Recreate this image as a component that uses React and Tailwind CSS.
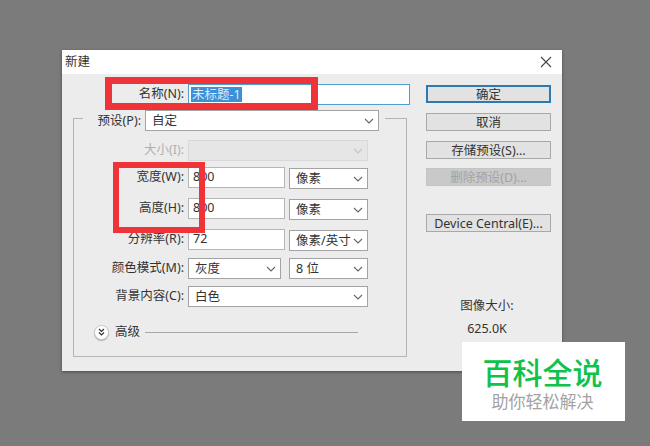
const FONT = "font-['Noto_Sans','Noto_Sans_CJK_SC',sans-serif]"

function Chevron({ color = '#666' }) {
  return (
    <svg width="10" height="6" viewBox="0 0 10 6" fill="none" className="shrink-0">
      <path d="M1 1l4 4 4-4" stroke={color} strokeWidth="1.1" />
    </svg>
  )
}

function Select({ value, width, disabled }) {
  return (
    <div
      className={`flex h-[21px] items-center justify-between border pl-[6px] pr-[4px] text-[12.5px] ${
        disabled ? 'border-[#d8d8d8] bg-[#e6e6e6]' : 'border-[#a3a3a3] bg-white'
      }`}
      style={{ width }}
    >
      <span className="pt-[2px]">{value}</span>
      <Chevron color={disabled ? '#c4c4c4' : '#666'} />
    </div>
  )
}

function Input({ value }) {
  return (
    <div className="flex h-[21px] w-[97px] items-center border border-[#b5b5b5] bg-white pl-[4px] text-[12.5px]">
      {value}
    </div>
  )
}

function Row({ label, muted, className, children }) {
  return (
    <div className={`flex items-start gap-[4px] ${className}`}>
      <div className={`flex h-[21px] w-[110px] items-center justify-end text-[12.5px] ${muted ? 'text-[#b0b0b0]' : ''}`}>
        {label}
      </div>
      {children}
    </div>
  )
}

function Button({ label, className, primary, disabled }) {
  return (
    <div
      className={`flex w-[125px] items-center justify-center pt-[2px] text-[12.5px] ${className} ${
        primary
          ? 'border-2 border-[#2d79b0] bg-[#e2e2e2]'
          : disabled
            ? 'border border-[#c4c4c4] bg-[#c9c9c9] text-[#a2a2a2]'
            : 'border border-[#a8a8a8] bg-[#e2e2e2]'
      }`}
    >
      {label}
    </div>
  )
}

export default function App() {
  return (
    <div className={`relative h-[446px] w-[650px] overflow-hidden bg-[#7b7b7b] pl-[62px] pt-[50px] text-[#333] ${FONT}`}>
      <div className="flex h-[321px] w-[500px] flex-col bg-[#ececec] shadow-[0_1px_3px_rgba(0,0,0,0.4)]">
        <div className="flex h-[24px] items-center justify-between bg-white pl-[3px] pr-[10px] text-[12.5px]">
          <span>新建</span>
          <svg width="12" height="12" viewBox="0 0 12 12" fill="none">
            <path d="M1 1l10 10M11 1L1 11" stroke="#444" strokeWidth="1.1" />
          </svg>
        </div>

        <div className="flex flex-1">
          <div className="w-[364px]">
            <div className="mt-[10px] flex gap-[4px]">
              <div className="flex h-[21px] w-[122px] items-center justify-end text-[12.5px]">名称(N):</div>
              <div className="flex h-[21px] w-[222px] items-center border border-[#4d9fd0] bg-white pl-[2px] text-[12.5px]">
                <span className="bg-[#3d8fd8] px-[1px] leading-[15px] text-[#dcecf8]">未标题-1</span>
              </div>
            </div>

            <div className="ml-[11px] mt-[13px] h-[239px] w-[334px] border border-[#b4b4b4]">
              <div className="ml-[9px] mt-[-9px] flex w-[302px] gap-[4px] bg-[#ececec]">
                <div className="flex h-[21px] w-[58px] items-center justify-end pt-[2px] text-[12.5px]">预设(P):</div>
                <Select value="自定" width="234px" />
              </div>

              <Row label="大小(I):" muted className="mt-[9px]">
                <Select value="" width="180px" disabled />
              </Row>
              <Row label="宽度(W):" className="mt-[6px]">
                <Input value="800" />
                <div className="mt-[1px]"><Select value="像素" width="79px" /></div>
              </Row>
              <Row label="高度(H):" className="mt-[9px]">
                <Input value="800" />
                <div className="mt-[1px]"><Select value="像素" width="79px" /></div>
              </Row>
              <Row label="分辨率(R):" className="mt-[9px]">
                <Input value="72" />
                <div className="mt-[1px]"><Select value="像素/英寸" width="79px" /></div>
              </Row>
              <Row label="颜色模式(M):" className="mt-[7px]">
                <Select value="灰度" width="93px" />
                <div className="ml-[4px]"><Select value="8 位" width="79px" /></div>
              </Row>
              <Row label="背景内容(C):" className="mt-[7px]">
                <Select value="白色" width="180px" />
              </Row>

              <div className="ml-[20px] mt-[16px] flex items-center text-[12.5px]">
                <div className="flex h-[15px] w-[15px] items-center justify-center rounded-full border border-[#c8c8c8] bg-white shadow-[0_1px_1px_rgba(0,0,0,0.25)]">
                  <svg width="7" height="8" viewBox="0 0 7 8" fill="none">
                    <path d="M1 1l2.500 2.500L6 1M1 4.500L3.500 7 6 4.500" stroke="#333" strokeWidth="1.2" />
                  </svg>
                </div>
                <span className="ml-[6px]">高级</span>
                <div className="ml-[5px] h-px w-[213px] bg-[#a8a8a8]" />
              </div>
            </div>
          </div>

          <div className="flex-1 pt-[11px]">
            <Button label="确定" primary className="h-[18px]" />
            <Button label="取消" className="mt-[10px] h-[18px]" />
            <Button label="存储预设(S)..." className="mt-[10px] h-[18px]" />
            <Button label="删除预设(D)..." disabled className="mt-[9px] h-[18px]" />
            <Button label="Device Central(E)..." className="mt-[28px] h-[18px]" />
            <div className="mt-[66px] w-[122px] text-center text-[12.5px] leading-[16px]">图像大小:</div>
            <div className="mt-[7px] w-[122px] text-center text-[12.5px] leading-[16px]">625.0K</div>
          </div>
        </div>
      </div>

      {/* annotations drawn over the dialog */}
      <div className="absolute left-[105px] top-[77px] h-[33px] w-[213px] border-[7px] border-[#ee3439]" />
      <div className="absolute left-[113px] top-[162px] h-[71px] w-[92px] border-[6px] border-[#ee3439]" />

      <div className="absolute left-[462px] top-[342px] flex h-[79px] w-[163px] flex-col items-center bg-white pr-[2px] pt-[15px]">
        <div className="text-[30px] font-medium leading-[32px] text-[#0fc24a]">百科全说</div>
        <div className="mt-[2px] text-[17px] leading-[22px] text-[#a3a3a3]">助你轻松解决</div>
      </div>
    </div>
  )
}
